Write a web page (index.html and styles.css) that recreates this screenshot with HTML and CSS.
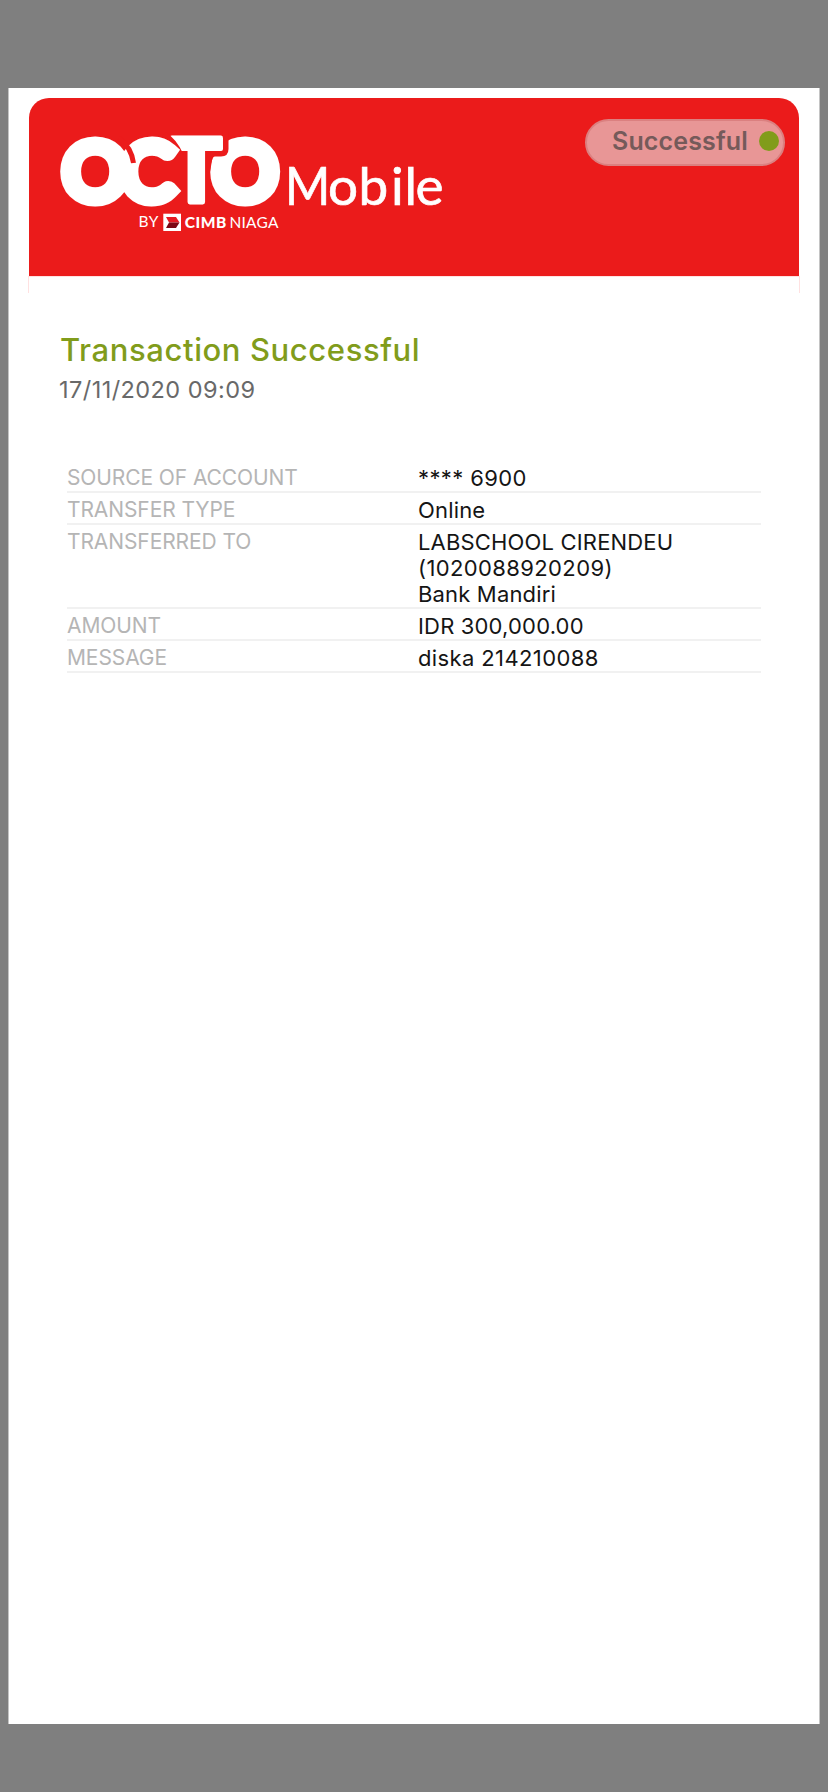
FILE: index.html
```html
<!DOCTYPE html>
<html lang="en">
<head>
<meta charset="utf-8">
<title>Transaction Successful</title>
<link rel="stylesheet" href="styles.css">
</head>
<body>
<main class="sheet">
  <header class="banner">
    <svg class="logo" width="400" height="110" viewBox="50 125 400 110" role="img" aria-label="OCTO Mobile by CIMB Niaga">
      <g class="octo">
        <text class="ring" transform="translate(245.3 197.500) scale(1.08 1.03)">O</text>
        <path class="gap wide" d="M225.500 130V149Q225.500 153.500 221 153.500H215Q210.500 153.500 209 160L207 172"/>
        <text class="tee" transform="translate(196.300 202) scale(.94 .97)">T</text>
        <path class="gap" d="M164 134Q175 141 181 155"/>
        <text class="ring" transform="translate(147.500 197.500) scale(1.03 1.03)">C</text>
        <path class="gap" d="M119 138A38 38 0 0 1 133.500 163"/>
        <text class="ring" transform="translate(95.300 197.500) scale(1.08 1.03)">O</text>
      </g>
      <text class="mobile" transform="translate(285 205) scale(.92 1)">M</text>
      <text class="mobile" y="205" x="328 358.500 391 404.500 415.500">obile</text>
      <text class="by" x="138.500" y="226.500" textLength="20">BY</text>
      <rect x="163.300" y="213.700" width="17.700" height="17.300" fill="#fff"/>
      <path fill="#e51b23" d="M166 217h10l3.500 5.500H169z"/>
      <path fill="#7b0714" d="M169 222.500h10.500L176 228h-10z"/>
      <text class="cimb" x="184.700" y="228" textLength="41.500">CIMB</text>
      <text class="by" x="229.500" y="228" textLength="49">NIAGA</text>
    </svg>
    <div class="status"><span class="status-text">Successful</span><span class="dot"></span></div>
  </header>
  <div class="edge"></div>
  <section class="content">
    <h1 class="title">Transaction Successful</h1>
    <p class="date">17/11/2020 09:09</p>
    <dl class="details">
      <div class="row"><dt>SOURCE OF ACCOUNT</dt><dd class="num">**** 6900</dd></div>
      <div class="row"><dt>TRANSFER TYPE</dt><dd>Online</dd></div>
      <div class="row tall"><dt>TRANSFERRED TO</dt><dd>LABSCHOOL CIRENDEU<br><span class="num">(1020088920209)</span><br>Bank Mandiri</dd></div>
      <div class="row"><dt>AMOUNT</dt><dd>IDR 300,000.00</dd></div>
      <div class="row"><dt>MESSAGE</dt><dd class="num">diska 214210088</dd></div>
    </dl>
  </section>
</main>
</body>
</html>
```
FILE: styles.css
```css
* { box-sizing: border-box; }
body {
  margin: 0;
  height: 1792px;
  padding: 88px 8px 68px;
  background: #7f7f7f;
  font-family: Inter, "Liberation Sans", sans-serif;
}
.sheet {
  height: 1636px;
  padding: 10px 20px 0;
  background: #fff;
  border: solid #c4c4c4;
  border-width: 0 1px;
}
.banner {
  display: flex;
  justify-content: space-between;
  align-items: flex-start;
  height: 178px;
  padding: 21px 14px 0 21px;
  background: #eb1b1b;
  border-radius: 20px 20px 0 0;
}
.logo { margin-top: 6px; overflow: visible; }
.octo text {
  fill: #fff;
  stroke: #fff;
  text-anchor: middle;
}
.octo .ring { font: 300 73px Lato, sans-serif; stroke-width: 15.5px; }
.octo .tee { font: 900 90px Lato, sans-serif; stroke-width: 5px; stroke-linejoin: round; }
.gap { fill: none; stroke: #eb1b1b; stroke-width: 5px; }
.gap.wide { stroke-width: 6px; }
.mobile {
  font: 400 53px Lato, sans-serif;
  fill: #fff;
  stroke: #fff;
  stroke-width: .7px;
}
.by { font: 400 15.5px Lato, sans-serif; fill: #fff; }
.cimb { font: 900 15.5px Lato, sans-serif; fill: #fff; }
.status {
  display: flex;
  align-items: center;
  justify-content: space-between;
  width: 200px;
  height: 47px;
  padding: 0 6px 4px 25px;
  background: #e89696;
  border: 2px solid #db8080;
  border-radius: 24px;
}
.status-text {
  font-size: 25px;
  font-weight: 600;
  line-height: 30px;
  letter-spacing: .15px;
  color: #755a5a;
  white-space: nowrap;
}
.dot { width: 20px; height: 20px; border-radius: 50%; background: #819c1b; flex: none; margin-right: -2px; }
.edge {
  height: 17px;
  margin: 0 -1px;
  border: 1px solid #ffe1e1;
  border-bottom: 0;
}
.content { padding: 37px 38px 0; }
.title {
  margin: 0 0 0 -7px;
  font-size: 31px;
  font-weight: 500;
  line-height: 40px;
  letter-spacing: .6px;
  color: #819c1b;
  white-space: nowrap;
}
.date {
  margin: 4px 0 0 -8px;
  font-size: 23.5px;
  line-height: 32px;
  letter-spacing: .44px;
  color: #696969;
}
.details { margin: 55px 0 0; }
.row {
  display: grid;
  grid-template-columns: 351px 1fr;
  height: 32px;
  padding-top: 3px;
  border-bottom: 2px solid #f1f1f1;
}
.tall { height: 84px; }
dt { margin-top: 1px; font-size: 21px; line-height: 26px; letter-spacing: -.1px; color: #b5b5b5; }
dd { margin: 1px 0 0; font-size: 22px; line-height: 26.2px; letter-spacing: .17px; color: #151515; white-space: nowrap; }
.num { letter-spacing: .38px; }
```
